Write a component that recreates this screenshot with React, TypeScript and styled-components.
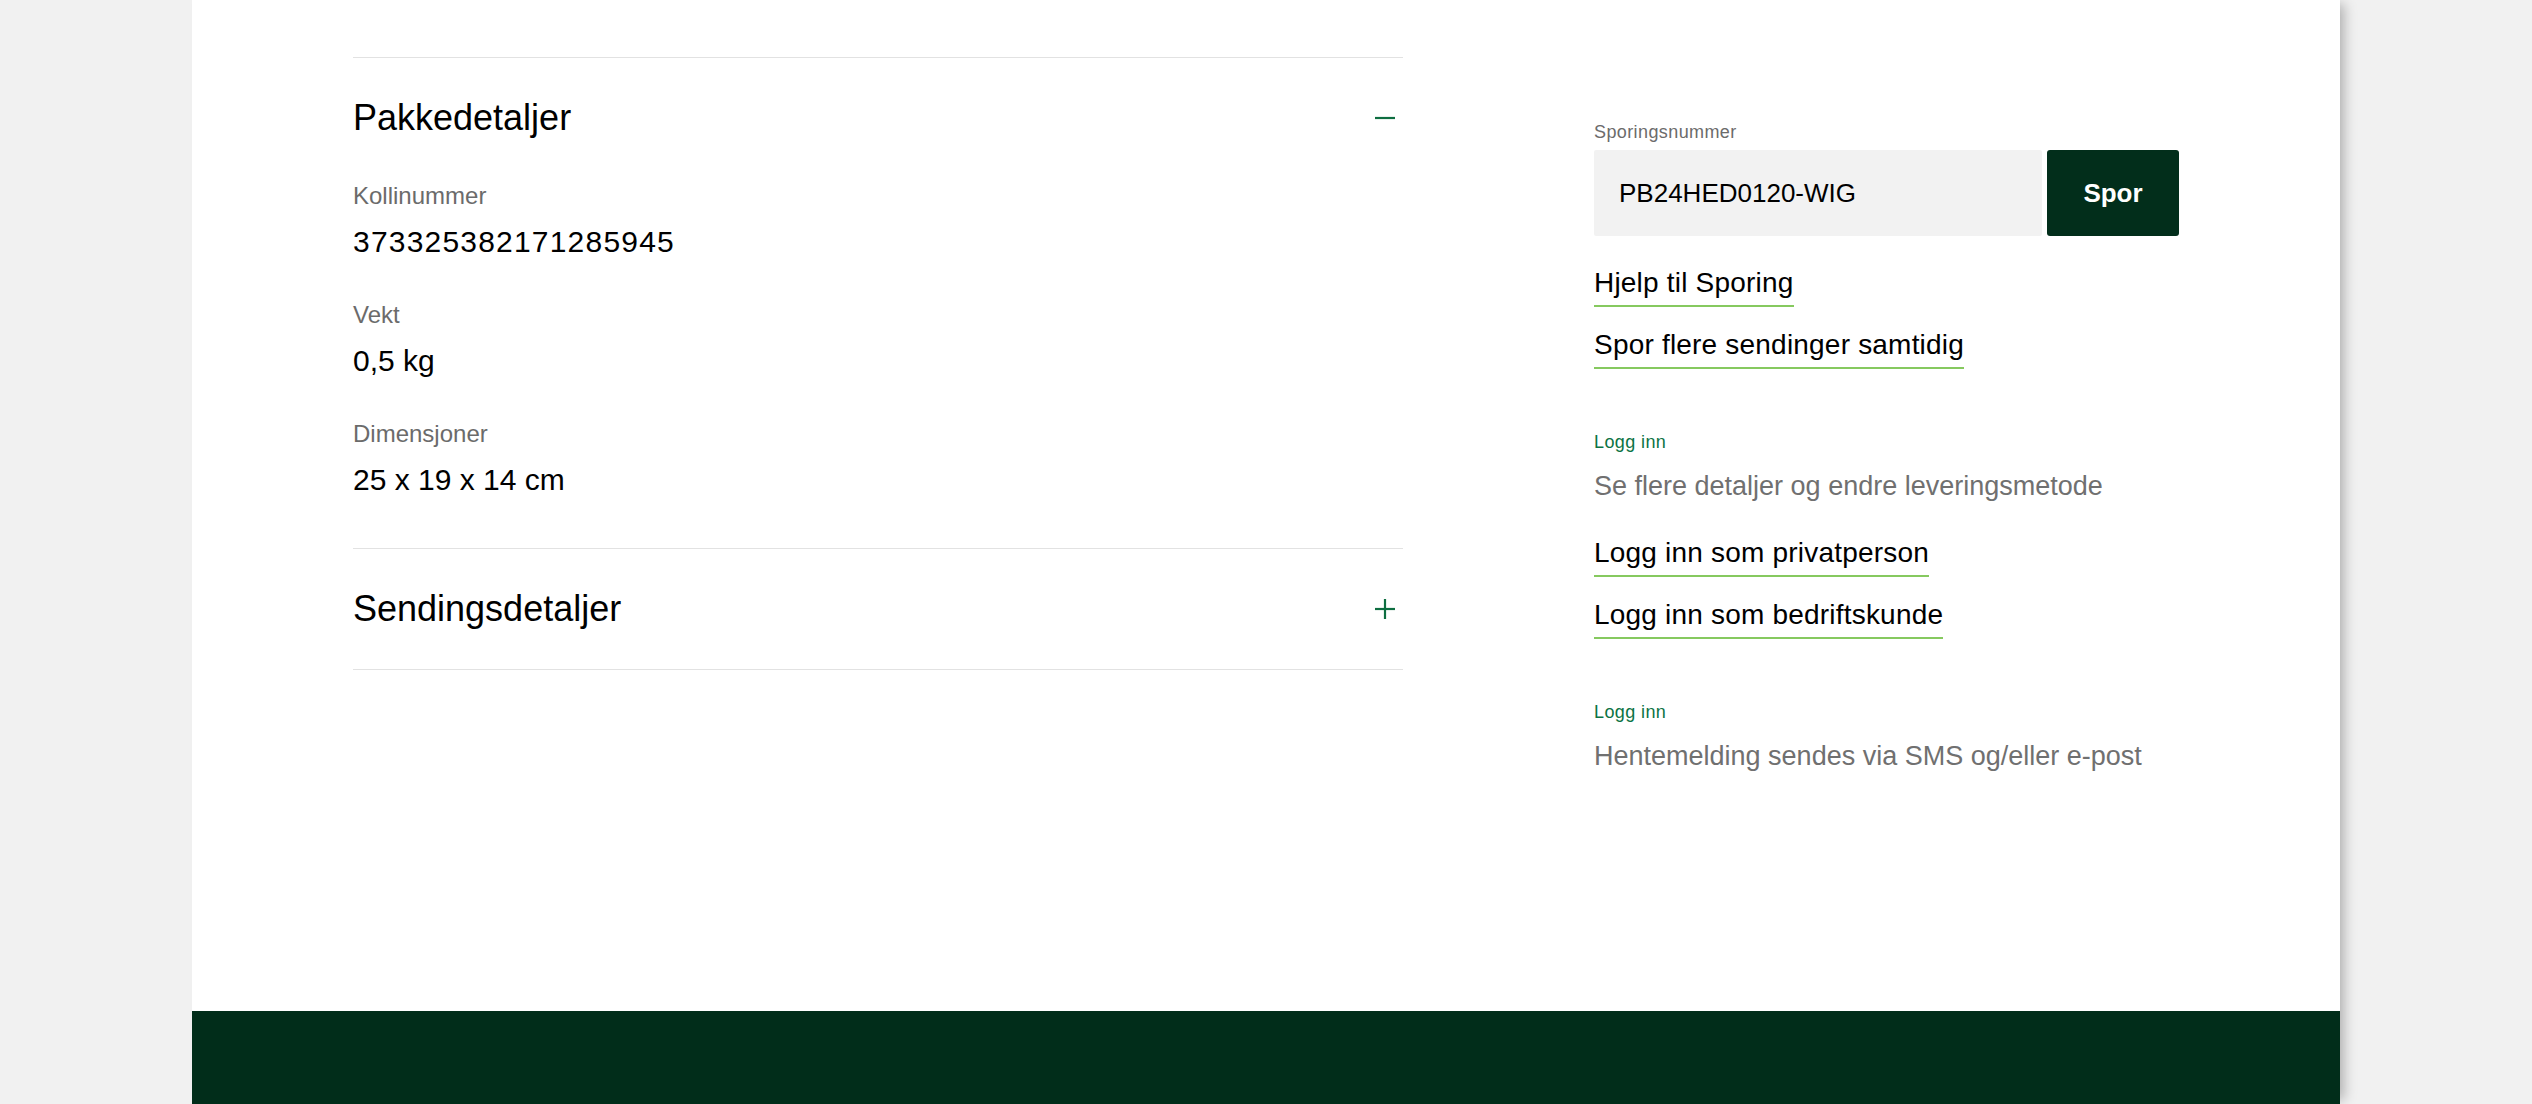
import styled, { createGlobalStyle } from "styled-components";

interface Field {
    label: string;
    value: string;
}

const packageFields: Field[] = [
    { label: "Kollinummer", value: "373325382171285945" },
    { label: "Vekt", value: "0,5 kg" },
    { label: "Dimensjoner", value: "25 x 19 x 14 cm" },
];

const Global = createGlobalStyle`
    html, body {
        margin: 0;
        padding: 0;
        background: #f1f1f1;
        font-family: "Liberation Sans", Arial, sans-serif;
        color: #000;
    }
    * { box-sizing: border-box; }
`;

export default function App() {
    return (
        <>
            <Global />
            <Page>
                <Panel>
                    <Main>
                        <Details>
                            <Accordion>
                                <AccordionHeader>
                                    <AccordionTitle>Pakkedetaljer</AccordionTitle>
                                    <ToggleIcon open />
                                </AccordionHeader>
                                <AccordionBody>
                                    {packageFields.map((f) => (
                                        <FieldBlock key={f.label}>
                                            <FieldLabel>{f.label}</FieldLabel>
                                            <FieldValue $digits={/^\d+$/.test(f.value)}>{f.value}</FieldValue>
                                        </FieldBlock>
                                    ))}
                                </AccordionBody>
                            </Accordion>
                            <Accordion>
                                <AccordionHeader>
                                    <AccordionTitle>Sendingsdetaljer</AccordionTitle>
                                    <ToggleIcon />
                                </AccordionHeader>
                            </Accordion>
                        </Details>

                        <Sidebar>
                            <Section>
                                <SmallLabel>Sporingsnummer</SmallLabel>
                                <SearchRow>
                                    <TrackInput defaultValue="PB24HED0120-WIG" />
                                    <TrackButton>Spor</TrackButton>
                                </SearchRow>
                                <LinkList $first>
                                    <LinkItem href="#">Hjelp til Sporing</LinkItem>
                                    <LinkItem href="#">Spor flere sendinger samtidig</LinkItem>
                                </LinkList>
                            </Section>

                            <Section>
                                <SmallLabel $green>Logg inn</SmallLabel>
                                <Muted>Se flere detaljer og endre leveringsmetode</Muted>
                                <LinkList>
                                    <LinkItem href="#">Logg inn som privatperson</LinkItem>
                                    <LinkItem href="#">Logg inn som bedriftskunde</LinkItem>
                                </LinkList>
                            </Section>

                            <Section>
                                <SmallLabel $green>Logg inn</SmallLabel>
                                <Muted>Hentemelding sendes via SMS og/eller e-post</Muted>
                            </Section>
                        </Sidebar>
                    </Main>
                    <Footer />
                </Panel>
            </Page>
        </>
    );
}

function ToggleIcon({ open = false }: { open?: boolean }) {
    return (
        <IconBox>
            <svg width="22" height="22" viewBox="0 0 22 22" fill="none">
                <line x1="0" y1="11" x2="20" y2="11" stroke="#0e6e41" strokeWidth="2.2" />
                {!open && <line x1="10" y1="1" x2="10" y2="21" stroke="#0e6e41" strokeWidth="2.2" />}
            </svg>
        </IconBox>
    );
}

const Page = styled.div`
    min-height: 100vh;
    background: #f1f1f1;
`;

const Panel = styled.div`
    width: 2148px;
    margin: 0 auto;
    min-height: 100vh;
    background: #fff;
    display: flex;
    flex-direction: column;
    box-shadow: 8px 0 12px -4px rgba(0, 0, 0, 0.28);
`;

const Main = styled.div`
    flex: 1;
    display: grid;
    grid-template-columns: 1050px 585px;
    column-gap: 191px;
    padding: 0 161px;
`;

const Details = styled.div`
    padding-top: 57px;
`;

const Accordion = styled.section`
    border-top: 1px solid #e2e2e2;
    &:last-child {
        border-bottom: 1px solid #e2e2e2;
    }
`;

const AccordionHeader = styled.div`
    display: flex;
    align-items: center;
    justify-content: space-between;
    padding: 38px 0;
`;

const AccordionTitle = styled.h2`
    margin: 0;
    font-size: 36px;
    line-height: 44px;
    font-weight: 400;
    color: #000;
`;

const IconBox = styled.span`
    display: flex;
    align-items: center;
    margin-right: 6px;
`;

const AccordionBody = styled.div`
    padding: 2px 0 48px;
    display: flex;
    flex-direction: column;
    gap: 37px;
`;

const FieldBlock = styled.div`
    display: flex;
    flex-direction: column;
    gap: 10px;
`;

const FieldLabel = styled.span`
    font-size: 24px;
    line-height: 32px;
    color: #6b6b6b;
`;

const FieldValue = styled.span<{ $digits?: boolean }>`
    font-size: 30px;
    line-height: 40px;
    letter-spacing: ${(p) => (p.$digits ? "1.2px" : "0")};
    color: #000;
`;

const Sidebar = styled.aside`
    padding-top: 120px;
    display: flex;
    flex-direction: column;
    gap: 61px;
`;

const Section = styled.div`
    display: flex;
    flex-direction: column;
    align-items: flex-start;
`;

const SmallLabel = styled.span<{ $green?: boolean }>`
    font-size: 18px;
    line-height: 24px;
    letter-spacing: 0.4px;
    color: ${(p) => (p.$green ? "#0b7344" : "#6b6b6b")};
`;

const SearchRow = styled.div`
    margin-top: 6px;
    width: 100%;
    display: flex;
    gap: 5px;
    height: 86px;
`;

const TrackInput = styled.input`
    flex: 1;
    min-width: 0;
    border: none;
    border-radius: 2px;
    background: #f2f2f2;
    padding: 0 25px;
    font-family: "Liberation Sans", Arial, sans-serif;
    font-size: 26px;
    color: #000;
    outline: none;
`;

const TrackButton = styled.button`
    width: 132px;
    border: none;
    border-radius: 3px;
    background: #022e1b;
    color: #fff;
    font-family: "Liberation Sans", Arial, sans-serif;
    font-size: 26px;
    font-weight: 700;
    cursor: pointer;
`;

const Muted = styled.p`
    margin: 14px 0 0;
    font-size: 27px;
    line-height: 36px;
    color: #707070;
`;

const LinkList = styled.div<{ $first?: boolean }>`
    margin-top: ${(p) => (p.$first ? "29px" : "31px")};
    display: flex;
    flex-direction: column;
    align-items: flex-start;
    gap: 20px;
`;

const LinkItem = styled.a`
    display: inline-block;
    font-size: 28px;
    line-height: 36px;
    letter-spacing: 0.2px;
    padding-bottom: 4px;
    color: #000;
    text-decoration: none;
    border-bottom: 2px solid #86c95f;
`;

const Footer = styled.footer`
    height: 93px;
    background: #012d1a;
`;
